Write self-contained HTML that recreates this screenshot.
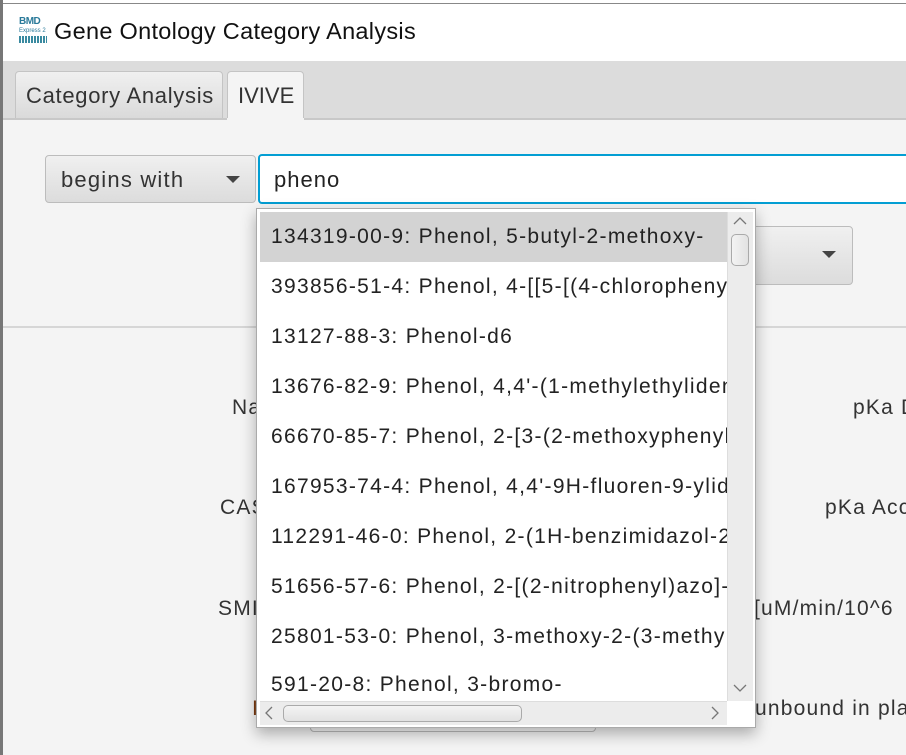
<!DOCTYPE html>
<html><head><meta charset="utf-8"><style>
*{margin:0;padding:0;box-sizing:border-box}
body{width:906px;height:755px;overflow:hidden;background:#f4f4f4;font-family:"Liberation Sans",sans-serif;color:#222;position:relative}
.a{position:absolute}
.lbl{position:absolute;font-size:21px;letter-spacing:1.2px;color:#333;white-space:nowrap}
.row{position:absolute;left:0;width:467px;height:50px;line-height:50px;padding-left:11px;font-size:21px;letter-spacing:1.3px;white-space:nowrap;overflow:hidden;color:#222}
</style></head><body>
<div class="a" style="left:0;top:0;width:906px;height:3px;background:#fff"></div>
<div class="a" style="left:0;top:0;width:3px;height:755px;background:#777"></div>
<div class="a" style="left:3px;top:3px;width:903px;height:58px;background:#fff;border-top:1px solid #888"></div>
<div class="a" style="left:19px;top:17px;width:28px;height:28px">
<div style="font-size:10px;font-weight:bold;color:#2a7a9a;line-height:10px;letter-spacing:-0.5px">BMD</div>
<div style="font-size:6px;color:#2a7a9a;line-height:8px">Express 2</div>
<div style="height:7px;margin-top:1px;background:repeating-linear-gradient(90deg,#3a8aa0 0 2px,#fff 2px 3px)"></div>
</div>
<div class="a" style="left:54px;top:18px;font-size:23.5px;letter-spacing:0.3px;color:#111">Gene Ontology Category Analysis</div>
<div class="a" style="left:3px;top:61px;width:903px;height:58px;background:#dcdcdc"></div>
<div class="a" style="left:15px;top:71px;width:208px;height:47px;background:linear-gradient(#f0f0f0,#dadada);border:1px solid #c4c4c4;border-bottom:none;border-radius:4px 4px 0 0"></div>
<div class="a" style="left:26px;top:83px;font-size:22px;letter-spacing:0.7px;color:#333">Category Analysis</div>
<div class="a" style="left:227px;top:71px;width:77px;height:49px;background:#f4f4f4;border:1px solid #c4c4c4;border-bottom:none;border-radius:4px 4px 0 0"></div>
<div class="a" style="left:238px;top:83px;font-size:22px;color:#333">IVIVE</div>
<div class="a" style="left:3px;top:118px;width:903px;height:2px;background:#c8c8c8"></div>
<div class="a" style="left:227px;top:118px;width:77px;height:2px;background:#f4f4f4"></div>
<div class="a" style="left:45px;top:155px;width:211px;height:48px;background:linear-gradient(#f0f0f0,#dcdcdc);border:1px solid #bcbcbc;border-radius:4px"></div>
<div class="a" style="left:61px;top:167px;font-size:22px;letter-spacing:1.2px;color:#333">begins with</div>
<div class="a" style="left:226px;top:176px;width:0;height:0;border-left:7px solid transparent;border-right:7px solid transparent;border-top:7px solid #444"></div>
<div class="a" style="left:258px;top:154px;width:660px;height:50px;background:#fff;border:2px solid #039ed3;border-radius:4px"></div>
<div class="a" style="left:274px;top:167px;font-size:22px;letter-spacing:1px;color:#222">pheno</div>
<div class="a" style="left:700px;top:226px;width:153px;height:59px;background:linear-gradient(#f0f0f0,#dcdcdc);border:1px solid #bcbcbc;border-radius:4px"></div>
<div class="a" style="left:822px;top:251px;width:0;height:0;border-left:7px solid transparent;border-right:7px solid transparent;border-top:7px solid #444"></div>
<div class="a" style="left:3px;top:326px;width:903px;height:2px;background:#d6d6d6"></div>
<div class="lbl" style="left:232px;top:396px">Na</div>
<div class="lbl" style="left:220px;top:496px">CAS</div>
<div class="lbl" style="left:218px;top:597px">SMI</div>
<div class="lbl" style="left:252px;top:697px;color:#7a3a10">I</div>
<div class="lbl" style="left:853px;top:396px">pKa D</div>
<div class="lbl" style="left:825px;top:496px">pKa Acc</div>
<div class="lbl" style="left:754px;top:597px">[uM/min/10^6</div>
<div class="lbl" style="left:755px;top:697px">unbound in pla</div>
<div class="a" style="left:310px;top:720px;width:286px;height:12px;border:1px solid #bbb;border-radius:4px;background:#fafafa"></div>
<div class="a" style="left:256px;top:208px;width:500px;height:520px;background:#fff;border:1px solid #aaa;box-shadow:0 6px 14px rgba(0,0,0,0.3);overflow:hidden">
 <div class="a" style="left:3px;top:3px;width:467px;height:489px;overflow:hidden">
  <div class="row" style="top:0;background:#d3d3d3">134319-00-9: Phenol, 5-butyl-2-methoxy-</div>
  <div class="row" style="top:50px">393856-51-4: Phenol, 4-[[5-[(4-chlorophenyl</div>
  <div class="row" style="top:100px">13127-88-3: Phenol-d6</div>
  <div class="row" style="top:150px">13676-82-9: Phenol, 4,4'-(1-methylethylidene</div>
  <div class="row" style="top:200px">66670-85-7: Phenol, 2-[3-(2-methoxyphenyl</div>
  <div class="row" style="top:250px">167953-74-4: Phenol, 4,4'-9H-fluoren-9-ylid</div>
  <div class="row" style="top:300px">112291-46-0: Phenol, 2-(1H-benzimidazol-2</div>
  <div class="row" style="top:350px">51656-57-6: Phenol, 2-[(2-nitrophenyl)azo]-</div>
  <div class="row" style="top:400px">25801-53-0: Phenol, 3-methoxy-2-(3-methyl</div>
  <div class="row" style="top:450px;line-height:46px">591-20-8: Phenol, 3-bromo-</div>
 </div>
 <div class="a" style="left:470px;top:3px;width:26px;height:489px;background:#ececec;border-left:1px solid #ddd"></div>
 <svg class="a" style="left:475px;top:6px" width="16" height="12"><path d="M2 9 L8 3 L14 9" fill="none" stroke="#777" stroke-width="1.3"/></svg>
 <div class="a" style="left:474px;top:25px;width:18px;height:32px;border:1px solid #aaa;border-radius:5px;background:linear-gradient(90deg,#f4f4f4,#e2e2e2)"></div>
 <svg class="a" style="left:475px;top:473px" width="16" height="12"><path d="M2 3 L8 9 L14 3" fill="none" stroke="#777" stroke-width="1.3"/></svg>
 <div class="a" style="left:3px;top:492px;width:467px;height:24px;background:#ececec;border-top:1px solid #ddd"></div>
 <svg class="a" style="left:6px;top:496px" width="12" height="16"><path d="M9 2 L3 8 L9 14" fill="none" stroke="#777" stroke-width="1.3"/></svg>
 <div class="a" style="left:26px;top:496px;width:239px;height:17px;border:1px solid #aaa;border-radius:5px;background:linear-gradient(#f4f4f4,#e2e2e2)"></div>
 <svg class="a" style="left:452px;top:496px" width="12" height="16"><path d="M3 2 L9 8 L3 14" fill="none" stroke="#777" stroke-width="1.3"/></svg>
 <div class="a" style="left:470px;top:492px;width:26px;height:24px;background:#fff"></div>
</div>
</body></html>
